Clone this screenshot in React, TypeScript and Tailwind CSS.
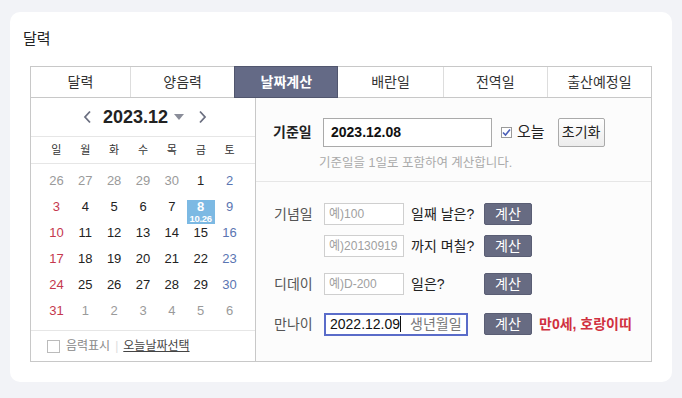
import React from "react";

const FONT = { fontFamily: '"Liberation Sans", "Noto Sans CJK KR", sans-serif' };

const tabs = ["달력", "양음력", "날짜계산", "배란일", "전역일", "출산예정일"];
const weekdays = ["일", "월", "화", "수", "목", "금", "토"];

type Day = { d: number; other?: boolean };
const weeks: Day[][] = [
  [{ d: 26, other: true }, { d: 27, other: true }, { d: 28, other: true }, { d: 29, other: true }, { d: 30, other: true }, { d: 1 }, { d: 2 }],
  [{ d: 3 }, { d: 4 }, { d: 5 }, { d: 6 }, { d: 7 }, { d: 8 }, { d: 9 }],
  [{ d: 10 }, { d: 11 }, { d: 12 }, { d: 13 }, { d: 14 }, { d: 15 }, { d: 16 }],
  [{ d: 17 }, { d: 18 }, { d: 19 }, { d: 20 }, { d: 21 }, { d: 22 }, { d: 23 }],
  [{ d: 24 }, { d: 25 }, { d: 26 }, { d: 27 }, { d: 28 }, { d: 29 }, { d: 30 }],
  [{ d: 31 }, { d: 1, other: true }, { d: 2, other: true }, { d: 3, other: true }, { d: 4, other: true }, { d: 5, other: true }, { d: 6, other: true }],
];

const dayColor = (col: number, other?: boolean) => {
  if (other) return "text-[#9a9a9a]";
  if (col === 0) return "text-[#c5384e]";
  if (col === 6) return "text-[#5a75b2]";
  return "text-[#222]";
};

const CalcButton = () => (
  <button className="h-[22px] w-[48px] bg-[#676b82] border border-[#5a5e74] rounded-[2px] text-white text-[14px] leading-[20px]">
    계산
  </button>
);

const SmallInput = ({ placeholder }: { placeholder: string }) => (
  <input
    placeholder={placeholder}
    className="h-[22px] w-[80px] border border-[#cfcfcf] bg-white px-[4px] text-[12px] text-[#333] placeholder:text-[#a0a0a0] outline-none"
  />
);

const App: React.FC = () => {
  return (
    <div className="w-[682px] h-[398px] bg-[#f2f3f7] pt-3 px-[10px]" style={FONT}>
      <div className="bg-white rounded-[10px] h-[370px] px-5 pt-[17px]">
        <h1 className="text-[15px] leading-[20px] text-[#222] -ml-[7px]">달력</h1>

        {/* Tabs */}
        <div className="mt-[17px] grid grid-cols-[99px_repeat(5,1fr)] h-[32px] border border-[#c8c8c8]">
          {tabs.map((t, i) => (
            <div
              key={t}
              className={
                "flex items-center justify-center text-[14px] " +
                (i === 2
                  ? "bg-[#646a86] text-white font-bold border border-[#51566e] -my-px"
                  : "text-[#333] " + (i > 0 && i !== 3 ? "border-l border-[#dddddd]" : ""))
              }
            >
              {t}
            </div>
          ))}
        </div>

        <div className="flex h-[264px] border-x border-b border-[#c8c8c8]">
          {/* Calendar */}
          <div className="w-[225px] border-r border-[#c8c8c8] flex flex-col">
            <div className="h-[39px] border-b border-[#e6e6e6] flex items-center justify-center pl-[4px]">
              <svg width="9" height="14" viewBox="0 0 9 14" className="mr-[11px]">
                <path d="M7 1.5 L2 7 L7 12.5" fill="none" stroke="#6b6f80" strokeWidth="1.8" />
              </svg>
              <span className="text-[18px] font-bold text-[#222] leading-[20px]">2023.12</span>
              <svg width="10" height="6" viewBox="0 0 10 6" className="ml-[6px] mr-[14px]">
                <path d="M0 0 L10 0 L5 6 Z" fill="#8a8d99" />
              </svg>
              <svg width="9" height="14" viewBox="0 0 9 14">
                <path d="M2 1.5 L7 7 L2 12.5" fill="none" stroke="#6b6f80" strokeWidth="1.8" />
              </svg>
            </div>
            <div className="h-[27px] border-b border-[#e6e6e6] grid grid-cols-7 px-[11px] items-center">
              {weekdays.map((w) => (
                <div key={w} className="text-center text-[11px] text-[#333]">
                  {w}
                </div>
              ))}
            </div>
            <div className="px-[11px] pt-[4px] pb-[6px] border-b border-[#e6e6e6]">
              {weeks.map((wk, r) => (
                <div key={r} className="grid grid-cols-7 h-[26px] items-center">
                  {wk.map((day, c) =>
                    r === 1 && c === 5 ? (
                      <div key={c} className="relative h-full">
                        <div className="absolute top-[6px] left-1/2 -translate-x-1/2 w-[28px] h-[24px] bg-[#7cb9e3] flex flex-col items-center text-white font-bold pt-[1px]">
                          <span className="text-[13px] leading-[12px]">8</span>
                          <span className="text-[9.5px] leading-[11px] tracking-[-0.3px]">10.26</span>
                        </div>
                      </div>
                    ) : (
                      <div key={c} className={"text-center text-[13px] " + dayColor(c, day.other)}>
                        {day.d}
                      </div>
                    )
                  )}
                </div>
              ))}
            </div>
            <div className="flex-1 flex items-center pl-[16px] text-[12px]">
              <span className="w-[13px] h-[13px] border border-[#bbbbbb] bg-white" />
              <span className="ml-[6px] text-[#888]">음력표시</span>
              <span className="mx-[5px] text-[#dddddd]">|</span>
              <span className="text-[#444] underline">오늘날짜선택</span>
            </div>
          </div>

          {/* Date calculation */}
          <div className="flex-1 flex flex-col bg-[#fcfcfc]">
            <div className="h-[84px] border-b border-[#e6e6e6] pt-[20px] pl-[17px]">
              <div className="flex items-center">
                <span className="w-[50px] text-[14px] font-bold text-[#222]">기준일</span>
                <div className="h-[29px] w-[169px] border border-[#aaaaaa] bg-white flex items-center pl-[7px] text-[14px] font-bold text-[#111]">
                  2023.12.08
                </div>
                <span className="ml-[9px] w-[11px] h-[11px] border border-[#9a9a9a] bg-white flex items-center justify-center">
                  <svg width="9" height="9" viewBox="0 0 9 9">
                    <path d="M1 4.5 L3.5 7 L8 1.5" fill="none" stroke="#4b5fb8" strokeWidth="1.6" />
                  </svg>
                </span>
                <span className="ml-[5px] text-[15px] text-[#222]">오늘</span>
                <button className="ml-[13px] h-[29px] w-[47px] border border-[#aaaaaa] rounded-[2px] bg-gradient-to-b from-white to-[#ececec] text-[14px] text-[#222]">
                  초기화
                </button>
              </div>
              <div className="mt-[8px] pl-[46px] text-[12.5px] text-[#aaaaaa] leading-[16px]">
                기준일을 1일로 포함하여 계산합니다.
              </div>
            </div>

            <div className="pt-[21px] pl-[18px] flex flex-col">
              <div className="flex items-center h-[22px]">
                <span className="w-[50px] text-[14px] text-[#555]">기념일</span>
                <SmallInput placeholder="예)100" />
                <span className="ml-[7px] w-[73px] text-[14px] text-[#222]">일째 날은?</span>
                <CalcButton />
              </div>
              <div className="flex items-center h-[22px] mt-[10px]">
                <span className="w-[50px]" />
                <SmallInput placeholder="예)20130919" />
                <span className="ml-[7px] w-[73px] text-[14px] text-[#222]">까지 며칠?</span>
                <CalcButton />
              </div>
              <div className="flex items-center h-[22px] mt-[16px]">
                <span className="w-[50px] text-[14px] text-[#555]">디데이</span>
                <SmallInput placeholder="예)D-200" />
                <span className="ml-[7px] w-[73px] text-[14px] text-[#222]">일은?</span>
                <CalcButton />
              </div>
              <div className="flex items-center h-[22px] mt-[18px]">
                <span className="w-[50px] text-[14px] text-[#555]">만나이</span>
                <div className="h-[23px] w-[144px] border-2 border-[#5a6cc9] bg-white flex items-center pl-[4px] text-[14px]">
                  <span className="text-[#111]">2022.12.09</span>
                  <span className="w-px h-[16px] bg-[#111]" />
                  <span className="ml-[9px] text-[#777]">생년월일</span>
                </div>
                <span className="ml-[16px]">
                  <CalcButton />
                </span>
                <span className="ml-[7px] text-[14px] font-bold text-[#d0303f]">만0세, 호랑이띠</span>
              </div>
            </div>
          </div>
        </div>
      </div>
    </div>
  );
};

export default App;
